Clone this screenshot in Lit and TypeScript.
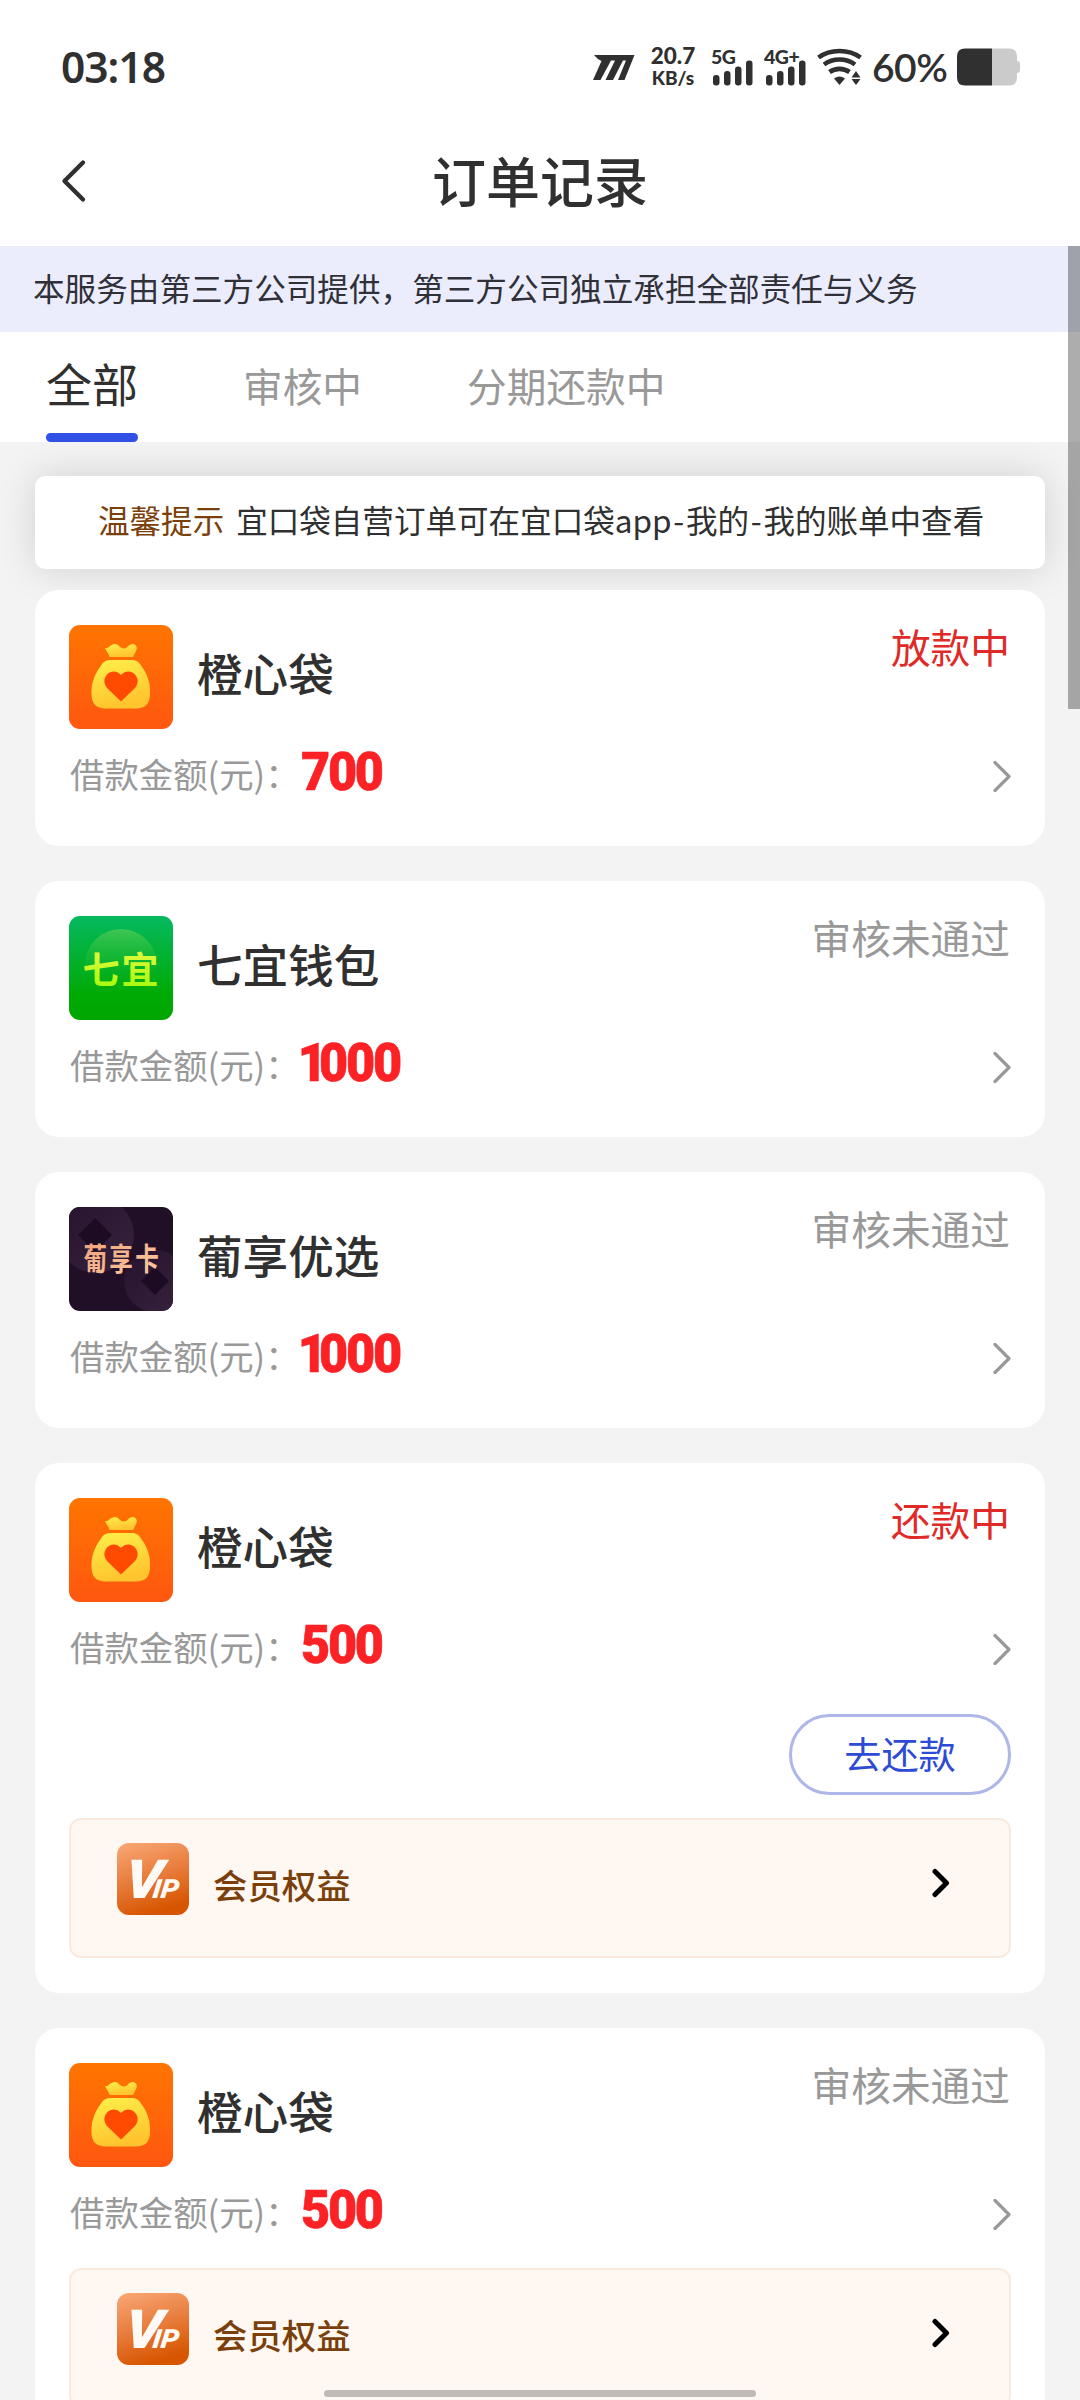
import { LitElement, html, css, svg, nothing } from "lit";
import { customElement, property } from "lit/decorators.js";

type Brand = "orange" | "seven" | "grape";

interface Order {
  brand: Brand;
  name: string;
  amount: string;
  status: string;
  active?: boolean;
  repay?: boolean;
  member?: boolean;
}

const ORDERS: Order[] = [
  { brand: "orange", name: "橙心袋", amount: "700", status: "放款中", active: true },
  { brand: "seven", name: "七宜钱包", amount: "1000", status: "审核未通过" },
  { brand: "grape", name: "葡享优选", amount: "1000", status: "审核未通过" },
  { brand: "orange", name: "橙心袋", amount: "500", status: "还款中", active: true, repay: true, member: true },
  { brand: "orange", name: "橙心袋", amount: "500", status: "审核未通过", member: true },
];

@customElement("brand-icon")
class BrandIcon extends LitElement {
  @property() brand: Brand = "orange";

  static styles = css`
    :host { display: block; width: 104px; height: 104px; border-radius: 11px; overflow: hidden; flex: none; }
    svg { display: block; }
    text { font-family: "Noto Sans CJK SC", sans-serif; font-weight: 700; }
  `;

  private art() {
    if (this.brand === "orange") {
      return svg`
        <defs>
          <linearGradient id="bg" x1="0" y1="0" x2="0" y2="1"><stop offset="0" stop-color="#ff7500"/><stop offset="1" stop-color="#ff5710"/></linearGradient>
          <linearGradient id="bag" x1="0" y1="0" x2=".3" y2="1"><stop offset="0" stop-color="#fff04a"/><stop offset="1" stop-color="#ffc42e"/></linearGradient>
        </defs>
        <rect width="104" height="104" fill="url(#bg)"/>
        <path d="M36 23C40 24 41 19 46 19C50 19 51 24 55 23.500C59 23 60 18.500 64 19C67 19.500 68.500 22 67.500 25L64 32H40.500C39.500 28 37 26 36 23Z" fill="url(#bag)"/>
        <path d="M41 35H63Q68 35 71 39Q81 52 81 65V69Q81 83.500 67 83.500H36.500Q22.500 83.500 22.500 69V65Q23 52 33 39Q36 35 41 35Z" fill="url(#bag)"/>
        <path d="M52 50C48 45.500 42 45.500 38.500 49C33.500 54 35 60 39 64L52 76.500L65 64C69 60 70.500 54 65.500 49C62 45.500 56 45.500 52 50Z" fill="#ff4a00"/>`;
    }
    if (this.brand === "seven") {
      return svg`
        <defs>
          <linearGradient id="bg" x1="0" y1="0" x2="0" y2="1"><stop offset="0" stop-color="#05b960"/><stop offset=".75" stop-color="#00aa05"/><stop offset="1" stop-color="#00a500"/></linearGradient>
          <linearGradient id="glow" x1="0" y1="0" x2="0" y2="1"><stop offset="0" stop-color="#8fdc5a" stop-opacity=".42"/><stop offset=".7" stop-color="#30c030" stop-opacity="0"/></linearGradient>
          <linearGradient id="ink" x1="0" y1="0" x2="0" y2="1"><stop offset="0" stop-color="#f0f94a"/><stop offset="1" stop-color="#9dfa05"/></linearGradient>
        </defs>
        <rect width="104" height="104" fill="url(#bg)"/>
        <circle cx="52" cy="49" r="36" fill="url(#glow)"/>
        <text x="13.500" y="67.500" font-size="37" textLength="76" fill="url(#ink)">七宜</text>`;
    }
    return svg`
      <defs>
        <linearGradient id="disc" x1="0" y1="0" x2="1" y2="1"><stop offset="0" stop-color="#26122d"/><stop offset="1" stop-color="#37233e"/></linearGradient>
        <linearGradient id="ink" x1="0" y1="0" x2="1" y2="1"><stop offset="0" stop-color="#ee9f78"/><stop offset="1" stop-color="#ffcda4"/></linearGradient>
      </defs>
      <rect width="104" height="104" fill="#210f27"/>
      <circle cx="27" cy="28" r="38" fill="url(#disc)"/>
      <path d="M26 11L43 28L26 45L9 28Z" fill="#1d0b24"/>
      <circle cx="86" cy="74" r="31" fill="url(#disc)"/>
      <path d="M86 60L100 74L86 88L72 74Z" fill="#1d0b24"/>
      <g transform="translate(14.500 0) scale(.76 1)">
        <text x="0" y="63" font-size="31" textLength="99" fill="url(#ink)">葡享卡</text>
      </g>`;
  }

  render() {
    return html`<svg width="104" height="104" viewBox="0 0 104 104">${this.art()}</svg>`;
  }
}

@customElement("status-bar")
class StatusBar extends LitElement {
  static styles = css`
    :host {
      display: flex; align-items: center; height: 134px; padding: 0 60px 0 61px; box-sizing: border-box;
      color: #303030; fill: #303030; font-family: "Noto Sans", "Open Sans", sans-serif; font-weight: 600;
    }
    svg { display: block; flex: none; }
    .time { font-size: 42.500px; letter-spacing: -1px; line-height: 60px; margin-right: auto; }
    .mark { margin: 1px 16px 0 0; }
    .speed { width: 44px; margin-right: 16px; font-family: Lato, "Noto Sans", sans-serif; font-size: 22.500px; line-height: 22px; white-space: nowrap; }
    .speed div { display: flex; justify-content: center; margin: 0 -6px; font-weight: 900; }
    .speed .unit { font-size: 19px; }
    .signal { display: grid; width: 42px; height: 38px; margin-right: 11px; }
    .signal > * { grid-area: 1 / 1; }
    .signal svg { align-self: end; }
    .net { font-family: Lato, "Noto Sans", sans-serif; font-size: 19.500px; line-height: 17px; font-weight: 900; letter-spacing: -0.5px; white-space: nowrap; }
    .wifi { margin-right: 9px; }
    .percent { font-family: Lato, "Noto Sans", sans-serif; font-size: 39px; line-height: 50px; width: 78px; letter-spacing: -0.5px; margin-right: 7px; font-weight: 600; white-space: nowrap; }
  `;

  private signal(label: string) {
    return html`<div class="signal">
      <span class="net">${label}</span>
      <svg width="42" height="38" viewBox="0 0 42 38">
        <rect x="2" y="27" width="6.500" height="10.500" rx="3"/>
        <rect x="13" y="23" width="6.500" height="14.500" rx="3"/>
        <rect x="24" y="18.500" width="6.500" height="19" rx="3"/>
        <rect x="35" y="12.500" width="6.500" height="25" rx="3"/>
      </svg>
    </div>`;
  }

  render() {
    return html`
      <span class="time">03:18</span>
      <svg class="mark" width="42" height="25" viewBox="0 0 42 25">
        <path d="M1 0H41.500L31.500 25H25L33 5.500H30L20 25H12.500L22 5.500H18L7.500 25H0L8.500 6Q4 4 1 0Z"/>
      </svg>
      <div class="speed"><div>20.7</div><div class="unit">KB/s</div></div>
      ${this.signal("5G")}${this.signal("4G+")}
      <svg class="wifi" width="46" height="38" viewBox="0 0 46 38">
        <g fill="none" stroke="#303030" stroke-width="4.600">
          <path d="M1.500 9.500C13 .8 32 .8 43.500 9.500"/>
          <path d="M7 16.500C16 9.800 29 9.800 38 16.500"/>
          <path d="M12.500 24C18.500 19.800 26.500 19.800 32.500 24"/>
        </g>
        <path d="M22.500 37L17 30.500Q22.500 26.500 28 30.500Z"/>
        <path d="M39 23L43.500 29.500H34.500ZM39 37L43.500 31H34.500Z"/>
      </svg>
      <span class="percent">60%</span>
      <svg width="63" height="38" viewBox="0 0 63 38">
        <path d="M8 .5H52Q60 .5 60 8.500V13Q63 13 63 16V22Q63 25 60 25V29.500Q60 37.500 52 37.500H35V.5Z" fill="#cbcbcb"/>
        <path d="M8 .5H35V37.500H8Q0 37.500 0 29.500V8.500Q0 .5 8 .5Z"/>
      </svg>`;
  }
}

@customElement("order-card")
class OrderCard extends LitElement {
  @property({ attribute: false }) order!: Order;

  static styles = css`
    :host { display: block; background: #fff; border-radius: 24px; padding: 35px 34px; }
    svg { display: block; flex: none; }
    .head { display: flex; height: 104px; }
    .name { margin-left: 24px; font-size: 45.600px; line-height: 95px; font-weight: 500; color: #303030; flex: 1; }
    .status { font-size: 39.700px; line-height: 40px; margin: 1px 1px 0 0; color: #999; }
    .status.active { color: #df2a28; }
    .row { display: flex; align-items: center; height: 70px; margin-top: 12px; }
    .label { font-size: 34.400px; line-height: 50px; color: #999; width: 231px; margin: -6px 0 0 1px; white-space: nowrap; }
    .amount {
      flex: 1; font-family: Roboto, sans-serif; font-weight: 900; font-size: 54.500px; line-height: 60px; letter-spacing: -2.500px;
      color: #fc2124; -webkit-text-stroke: 0.600px #fc2124; transform: scaleX(0.925); transform-origin: left; margin-top: -9px;
    }
    .amount .one { letter-spacing: -8.500px; margin-left: -3.500px; }
    .actions { display: flex; justify-content: flex-end; padding: 30px 0 4px; }
    .repay {
      width: 222px; height: 81px; box-sizing: border-box; border: 3px solid #afb7e9; border-radius: 41px;
      background: #fff; color: #2d4bd4; font: inherit; font-size: 37.200px; line-height: 70px; padding: 0 0 3px; text-align: center;
    }
    .member {
      display: flex; box-sizing: border-box; height: 140px; margin-top: 19px; padding: 23px 59px 0 46px;
      border: 2px solid #f9eadf; border-radius: 12px; background: #fff7f1;
    }
    .benefit { flex: 1; margin-left: 24px; font-size: 34.400px; line-height: 83px; font-weight: 500; color: #7a400b; }
    .go { margin-top: 25px; }
    .vip { font-family: Roboto, "Liberation Sans", sans-serif; font-style: italic; font-weight: 900; fill: #fffaf5; }
    .big { font-size: 54px; }
    .small { font-size: 26.500px; }
  `;

  private member() {
    return html`<div class="member">
      <svg width="72" height="72" viewBox="0 0 72 72">
        <defs><linearGradient id="vip" x1=".1" y1="0" x2=".4" y2="1">
          <stop offset="0" stop-color="#f8a674"/><stop offset=".55" stop-color="#e77a39"/><stop offset="1" stop-color="#d75500"/>
        </linearGradient></defs>
        <rect width="72" height="72" rx="12" fill="url(#vip)"/>
        <g transform="translate(6 55) skewX(-7) scale(1.080 1)">
          <text class="vip"><tspan class="big">V</tspan><tspan class="small" dx="-8">IP</tspan></text>
        </g>
      </svg>
      <span class="benefit">会员权益</span>
      <svg class="go" width="18" height="30" viewBox="0 0 18 30">
        <path d="M3 3.500L14.500 15L3 26.500" fill="none" stroke="#000" stroke-width="5" stroke-linecap="round" stroke-linejoin="round"/>
      </svg>
    </div>`;
  }

  private amount(value: string) {
    return value.startsWith("1")
      ? html`<span class="amount"><span class="one">1</span>${value.slice(1)}</span>`
      : html`<span class="amount">${value}</span>`;
  }

  render() {
    const o = this.order;
    return html`
      <div class="head">
        <brand-icon .brand=${o.brand}></brand-icon>
        <span class="name">${o.name}</span>
        <span class="status ${o.active ? "active" : ""}">${o.status}</span>
      </div>
      <div class="row">
        <span class="label">借款金额(元)：</span>
        ${this.amount(o.amount)}
        <svg width="18" height="32" viewBox="0 0 18 32">
          <path d="M2 2.500L16 16.500L2 30.500" fill="none" stroke="#999" stroke-width="3.200" stroke-linecap="round" stroke-linejoin="round"/>
        </svg>
      </div>
      ${o.repay ? html`<div class="actions"><button class="repay">去还款</button></div>` : nothing}
      ${o.member ? this.member() : nothing}`;
  }
}

@customElement("app-root")
class AppRoot extends LitElement {
  static styles = css`
    :host {
      display: block; position: relative; width: 1080px; height: 2400px; overflow: hidden;
      background: #f3f3f3; font-family: "Noto Sans CJK SC", sans-serif; color: #303030;
    }
    .top { background: #fff; position: relative; z-index: 1; }
    .nav { display: grid; grid-template-columns: 100px 1fr 100px; align-items: center; height: 112px; box-sizing: border-box; padding-bottom: 18px; }
    .back { display: block; margin-left: 61px; }
    .title { font-size: 54px; line-height: 80px; font-weight: 500; text-align: center; margin-top: -2px; }
    .banner { background: #ebedfd; height: 86px; line-height: 82px; padding-left: 33px; font-size: 31.600px; color: #303138; white-space: nowrap; box-sizing: border-box; }
    .tabs { display: flex; gap: 105px; height: 110px; padding-left: 46px; align-items: baseline; }
    .tab { font-size: 39.700px; line-height: 100px; height: 110px; color: #999; box-sizing: border-box; }
    .tab.on { font-size: 46px; color: #303030; display: flex; flex-direction: column; }
    .tab.on::after { content: ""; height: 9px; margin-top: 1px; border-radius: 4.500px; background: #3150e6; }
    .notice {
      margin: 34px 35px 20.500px; height: 93px; line-height: 87px; padding-left: 63px; border-radius: 10px; background: #fff;
      box-shadow: 0 0 38px rgba(0, 0, 0, 0.14); font-size: 31.550px; white-space: nowrap; display: flex; gap: 12px;
    }
    .tip { color: #7a400b; }
    .dash { padding: 0 1.700px; }
    .list { display: flex; flex-direction: column; gap: 35px; padding: 0 35px; }
    .scroll { position: absolute; z-index: 2; right: 0; top: 246px; width: 12px; height: 463px; background: rgba(0, 0, 0, 0.32); }
    .pill { position: absolute; z-index: 2; left: 324px; top: 2390px; width: 432px; height: 7px; border-radius: 4px; background: #c0bbb6; }
  `;

  render() {
    return html`
      <div class="top">
        <status-bar></status-bar>
        <div class="nav">
          <svg class="back" width="26" height="44" viewBox="0 0 26 44">
            <path d="M22 3.500L3.500 22L22 40.500" fill="none" stroke="#303030" stroke-width="4.400" stroke-linecap="round" stroke-linejoin="round"/>
          </svg>
          <span class="title">订单记录</span>
        </div>
        <div class="banner">本服务由第三方公司提供，第三方公司独立承担全部责任与义务</div>
        <div class="tabs">
          <div class="tab on">全部</div>
          <div class="tab">审核中</div>
          <div class="tab">分期还款中</div>
        </div>
      </div>
      <div class="notice">
        <span class="tip">温馨提示</span>
        <span>宜口袋自营订单可在宜口袋app<span class="dash">-</span>我的<span class="dash">-</span>我的账单中查看</span>
      </div>
      <div class="list">${ORDERS.map((o) => html`<order-card .order=${o}></order-card>`)}</div>
      <div class="scroll"></div>
      <div class="pill"></div>`;
  }
}
